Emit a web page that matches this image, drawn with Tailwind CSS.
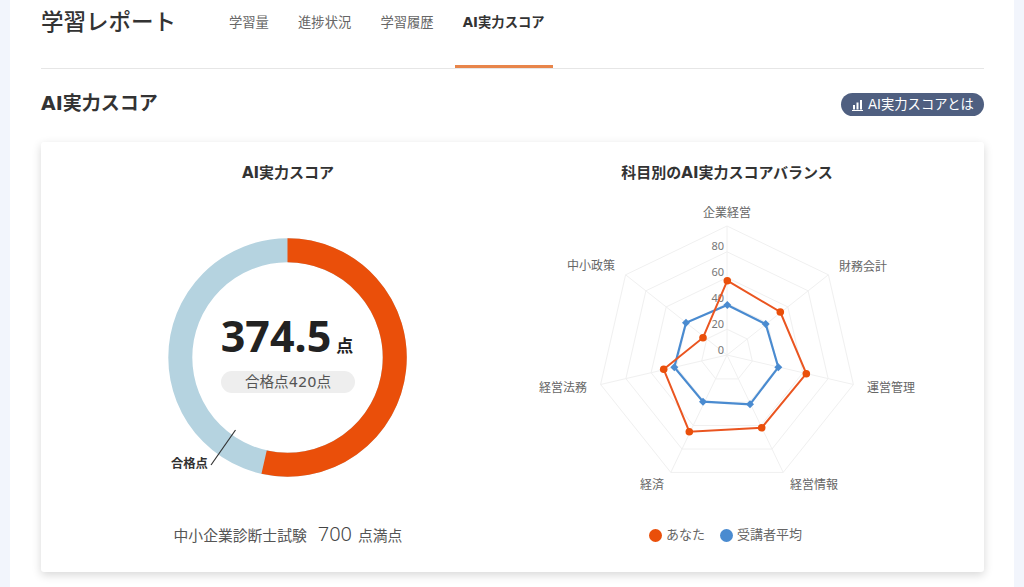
<!DOCTYPE html>
<html lang="ja">
<head>
<meta charset="utf-8">
<script src="https://cdn.jsdelivr.net/npm/@tailwindcss/browser@4"></script>
</head>
<body class="m-0 h-[587px] overflow-hidden bg-[#f2f5fc] font-['DejaVu_Sans','Noto_Sans_CJK_JP',sans-serif] text-[#333]">
<div class="ml-[10px] mr-[10px] h-[587px] bg-white pl-[31px] pr-[30px]">
  <header class="flex h-[69px] items-start border-b border-[#e6e6e6]">
    <h1 class="mt-[5px] w-[180px] text-[22.5px] leading-[34px] font-medium text-[#333]">学習レポート</h1>
    <nav class="flex gap-[13.2px] text-[13.3px] text-[#666]">
      <a class="h-[68px] px-2 pt-[13px] leading-5">学習量</a>
      <a class="h-[68px] px-2 pt-[13px] leading-5">進捗状況</a>
      <a class="h-[68px] px-2 pt-[13px] leading-5">学習履歴</a>
      <a class="h-[68px] border-b-[3px] border-[#e8854a] px-2 pt-[13px] leading-5 font-bold text-[#333]">AI実力スコア</a>
    </nav>
  </header>
  <div class="mt-6 flex h-[23px] items-center justify-between">
    <h2 class="mt-[-3px] text-[19px] leading-6 font-semibold text-[#333]">AI実力スコア</h2>
    <a class="flex h-[23px] w-[143px] items-center gap-[4px] rounded-full bg-[#4f5f80] pl-[11px] text-[13.3px] text-white">
      <svg width="12" height="12" viewBox="0 0 12 12" fill="#fff"><rect x="1" y="6" width="2" height="4.5"/><rect x="4.5" y="3.5" width="2" height="7"/><rect x="8" y="1" width="2" height="9.5"/><rect x="0" y="11" width="11" height="1"/></svg>
      <span>AI実力スコアとは</span>
    </a>
  </div>
  <section class="mt-[26px] grid h-[430px] grid-cols-[494px_384px] rounded-[3px] bg-white shadow-[0_3px_10px_rgba(0,0,0,0.16)]">
    <div class="flex flex-col items-center pt-[21px]">
      <h3 class="text-[15px] leading-5 font-bold text-[#333]">AI実力スコア</h3>
      <div class="relative mt-[54px] h-[240px] w-[240px]">
        <svg width="240" height="240" viewBox="0 0 240 240" class="block" fill="none">
          <circle cx="119.5" cy="120.5" r="107.2" stroke="#b5d3e0" stroke-width="24"/>
          <path d="M119.5 13.3 A107.2 107.2 0 1 1 96.1 225.1" stroke="#ea4f0a" stroke-width="24"/>
          <line x1="67.5" y1="193" x2="43" y2="228" stroke="#333" stroke-width="1.2"/>
        </svg>
        <div class="absolute top-[74px] left-[-1px] flex w-full items-baseline justify-center">
          <span class="font-['Noto_Sans',sans-serif] text-[43px] leading-[50px] font-bold text-[#222]">374.5</span>
          <span class="ml-[5px] font-['Noto_Sans_CJK_JP',sans-serif] text-[17px] font-bold text-[#222]">点</span>
        </div>
        <div class="absolute top-[134px] left-[53px] h-[22px] w-[134px] rounded-full bg-[#eeeeee] text-center text-[14.6px] leading-[22px] text-[#555]">合格点420点</div>
        <span class="absolute top-[218px] left-[3px] text-[12.3px] leading-[18px] font-bold whitespace-nowrap text-[#333]">合格点</span>
      </div>
      <p class="mt-[45px] flex items-baseline text-[14.8px] leading-6 text-[#555]">中小企業診断士試験<span class="ml-[11px] mr-[6px] font-['Noto_Sans',sans-serif] text-[20px] font-light text-[#444]">700</span>点満点</p>
    </div>
    <div class="flex flex-col items-center pt-[21px]">
      <h3 class="text-[15px] leading-5 font-bold text-[#333]">科目別のAI実力スコアバランス</h3>
      <svg width="384" height="316" viewBox="535 184 384 316" class="mt-[1px] block" font-size="12" fill="#666" text-anchor="middle">
        <g fill="none" stroke="#f0f0f0" stroke-width="1">
          <polygon points="727,329.2 747.3,339 752.3,361.1 738.2,378.9 715.8,378.9 701.7,361.1 706.7,339"/>
          <polygon points="727,303.4 767.6,322.9 777.6,366.9 749.4,402.1 704.6,402.1 676.4,366.9 686.4,322.9"/>
          <polygon points="727,277.6 787.8,306.9 802.9,372.7 760.7,425.5 693.3,425.5 651.1,372.7 666.2,306.9"/>
          <polygon points="727,251.8 808.1,290.8 828.1,378.6 772,449 682,449 625.9,378.6 645.9,290.8"/>
          <polygon points="727,226 828.4,274.8 853.4,384.5 783.2,472.4 670.8,472.4 600.6,384.5 625.6,274.8"/>
          <path d="M727 355V226M727 355L828.4 274.8M727 355L853.4 384.5M727 355L783.2 472.4M727 355L670.8 472.4M727 355L600.6 384.5M727 355L625.6 274.8"/>
        </g>
        <g font-family="'Noto Sans', sans-serif" font-size="11" fill="#777" text-anchor="end">
          <text x="724" y="354">0</text><text x="724" y="328">20</text><text x="724" y="302">40</text><text x="724" y="276">60</text><text x="724" y="250">80</text>
        </g>
        <text x="727" y="217">企業経営</text>
        <text x="863" y="271">財務会計</text>
        <text x="891" y="392">運営管理</text>
        <text x="814" y="489">経営情報</text>
        <text x="652" y="489">経済</text>
        <text x="563" y="392">経営法務</text>
        <text x="591" y="270">中小政策</text>
        <polygon points="727.3,305 765.7,324 778.3,367.3 750,404.3 703,401.7 674.3,367.3 686,322.7" fill="none" stroke="#4a8bd0" stroke-width="2.2"/>
        <g fill="#4a8bd0">
          <polygon points="727.3,301 731.3,305 727.3,309 723.3,305"/>
          <polygon points="765.7,320 769.7,324 765.7,328 761.7,324"/>
          <polygon points="778.3,363.3 782.3,367.3 778.3,371.3 774.3,367.3"/>
          <polygon points="750,400.3 754,404.3 750,408.3 746,404.3"/>
          <polygon points="703,397.7 707,401.7 703,405.7 699,401.7"/>
          <polygon points="674.3,363.3 678.3,367.3 674.3,371.3 670.3,367.3"/>
          <polygon points="686,318.7 690,322.7 686,326.7 682,322.7"/>
        </g>
        <polygon points="727.3,280.7 780.3,312 806.3,373.7 761.7,427.7 689.3,431.7 663.7,369.3 703,337.7" fill="none" stroke="#ea5520" stroke-width="2"/>
        <g fill="#ea4f0a"><circle cx="727.3" cy="280.7" r="3.8"/><circle cx="780.3" cy="312" r="3.8"/><circle cx="806.3" cy="373.7" r="3.8"/><circle cx="761.7" cy="427.7" r="3.8"/><circle cx="689.3" cy="431.7" r="3.8"/><circle cx="663.7" cy="369.3" r="3.8"/><circle cx="703" cy="337.7" r="3.8"/></g>
      </svg>
      <div class="mt-[25px] mr-[3px] flex items-center text-[13px] leading-5 text-[#666]">
        <span class="h-[13px] w-[13px] rounded-full bg-[#ea4f0a]"></span><span class="ml-[4px]">あなた</span>
        <span class="ml-[15px] h-[13px] w-[13px] rounded-full bg-[#4a8bd0]"></span><span class="ml-[4px]">受講者平均</span>
      </div>
    </div>
  </section>
</div>
</body>
</html>
